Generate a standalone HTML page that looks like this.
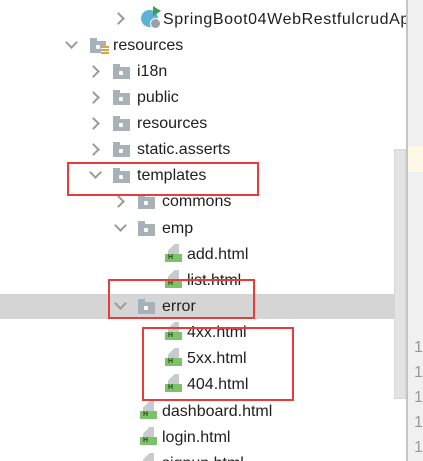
<!DOCTYPE html>
<html><head><style>
body{margin:0;width:423px;height:461px;overflow:hidden;background:#fff;position:relative;font-family:"Liberation Sans","Noto Sans CJK SC",sans-serif;font-size:16px;color:#1e1e1e}
#lp{position:absolute;left:0;top:0;width:406px;height:461px;overflow:hidden}
.r{position:absolute;height:26px;line-height:28px;white-space:nowrap}
.chev{position:absolute;width:7px;height:7px;border-right:2px solid #9a9a9a;border-bottom:2px solid #9a9a9a}
.cr{transform:rotate(-45deg)}
.cd{transform:rotate(45deg)}
.fold{position:absolute;width:17px;height:12px;background:#a9b1b8}
.fold:before{content:"";position:absolute;left:0;top:-3px;width:7px;height:3px;background:#a9b1b8}
.fold:after{content:"";position:absolute;left:6px;top:4px;width:4px;height:4px;background:#fff;border-radius:1px}
.file{position:absolute;width:16px;height:19px}
.file i{position:absolute;left:3px;top:0;width:11px;height:11px;background:#c8cbcd;clip-path:polygon(60% 0,100% 0,100% 100%,0 100%,0 60%)}
.file b{position:absolute;left:0;top:10px;width:17px;height:8px;background:#7cc26a;font:bold 7px/8px "Liberation Sans",sans-serif;color:#2a4a1a;padding-left:3px;box-sizing:border-box}
.box{position:absolute;border:2px solid #ea3b3b;box-sizing:border-box}
</style></head><body>
<div id="lp">
<div style="position:absolute;left:0;top:294px;width:406px;height:25px;background:#d5d5d5"></div>
<div style="position:absolute;left:394px;top:149px;width:12px;height:250px;background:#e3e3e3;border:1px solid #d6d6d6;box-sizing:border-box"></div>

<div class="chev cr" style="left:114px;top:14px"></div>
<div style="position:absolute;left:141px;top:10px;width:17px;height:17px;border-radius:50%;background:#5bb3d6"></div>
<div style="position:absolute;left:150px;top:18px;width:9px;height:9px;border-radius:50%;background:#9aa0a6;border:1px solid #fff"></div>
<div style="position:absolute;left:153px;top:6px;width:0;height:0;border-left:8px solid #3aa04a;border-top:5px solid transparent;border-bottom:5px solid transparent"></div>
<div class="r" style="left:163px;top:6px;letter-spacing:0.6px">SpringBoot04WebRestfulcrudApp</div>

<div class="chev cd" style="left:67px;top:38px"></div>
<div class="fold" style="left:90px;top:41px;width:16px"></div>
<div style="position:absolute;left:101px;top:46px;width:8px;height:9px;background:repeating-linear-gradient(#d9a441 0 2px,#fff 2px 3px)"></div>
<div class="r" style="left:113px;top:32px">resources</div>

<div class="chev cr" style="left:89px;top:67px"></div><div class="fold" style="left:113px;top:67px"></div><div class="r" style="left:137px;top:58px">i18n</div>
<div class="chev cr" style="left:89px;top:93px"></div><div class="fold" style="left:113px;top:93px"></div><div class="r" style="left:137px;top:84px">public</div>
<div class="chev cr" style="left:89px;top:119px"></div><div class="fold" style="left:113px;top:119px"></div><div class="r" style="left:137px;top:110px">resources</div>
<div class="chev cr" style="left:89px;top:145px"></div><div class="fold" style="left:113px;top:145px"></div><div class="r" style="left:137px;top:136px">static.asserts</div>
<div class="chev cd" style="left:91px;top:168px"></div><div class="fold" style="left:113px;top:171px"></div><div class="r" style="left:137px;top:162px">templates</div>

<div class="chev cr" style="left:114px;top:197px"></div><div class="fold" style="left:138px;top:197px"></div><div class="r" style="left:162px;top:188px">commons</div>
<div class="chev cd" style="left:116px;top:221px"></div><div class="fold" style="left:138px;top:224px"></div><div class="r" style="left:162px;top:215px">emp</div>

<div class="file" style="left:165px;top:244px"><i></i><b>H</b></div><div class="r" style="left:187px;top:241px">add.html</div>
<div class="file" style="left:165px;top:270px"><i></i><b>H</b></div><div class="r" style="left:187px;top:267px">list.html</div>

<div class="chev cd" style="left:116px;top:299px"></div><div class="fold" style="left:138px;top:302px"></div><div class="r" style="left:162px;top:293px">error</div>

<div class="file" style="left:165px;top:322px"><i></i><b>H</b></div><div class="r" style="left:187px;top:319px">4xx.html</div>
<div class="file" style="left:165px;top:348px"><i></i><b>H</b></div><div class="r" style="left:187px;top:345px">5xx.html</div>
<div class="file" style="left:165px;top:374px"><i></i><b>H</b></div><div class="r" style="left:187px;top:371px">404.html</div>

<div class="file" style="left:140px;top:401px"><i></i><b>H</b></div><div class="r" style="left:162px;top:398px">dashboard.html</div>
<div class="file" style="left:140px;top:427px"><i></i><b>H</b></div><div class="r" style="left:162px;top:424px">login.html</div>
<div class="file" style="left:140px;top:453px"><i></i><b>H</b></div><div class="r" style="left:162px;top:450px">signup.html</div>

<div class="box" style="left:67px;top:162px;width:192px;height:34px"></div>
<div class="box" style="left:108px;top:279px;width:147px;height:40px"></div>
<div class="box" style="left:142px;top:327px;width:152px;height:74px"></div>
</div>
<div style="position:absolute;left:406px;top:0;width:2px;height:461px;background:#c4c4c4"></div>
<div style="position:absolute;left:408px;top:0;width:15px;height:461px;background:#f0f0f0"></div>
<div style="position:absolute;left:408px;top:146px;width:15px;height:26px;background:#fef8e6"></div>
<div style="position:absolute;left:414px;top:335px;color:#999;font-size:16px;line-height:25px">1<br>1<br>1<br>1<br>1</div>
</body></html>
